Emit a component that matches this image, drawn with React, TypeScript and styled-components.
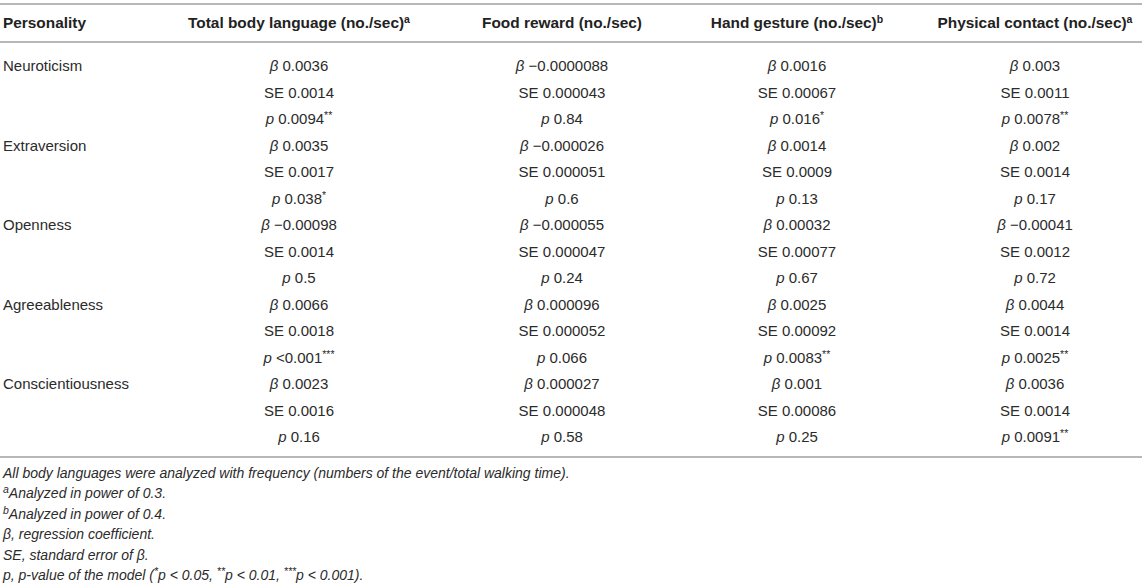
import React from "react";
import styled, { createGlobalStyle } from "styled-components";

const Global = createGlobalStyle`
  html, body { margin: 0; padding: 0; background: #fff; }
  body { font-family: "Liberation Sans", Arial, sans-serif; color: #2b2b2b; }
`;

const Page = styled.div`
  padding-top: 3px;
  width: 1142px;
`;

const Table = styled.table`
  width: 1142px;
  border-collapse: collapse;
  table-layout: fixed;
  font-size: 15px;
  border-top: 2px solid #b8b8b8;
  border-bottom: 2px solid #b8b8b8;
`;

const Col = styled.col<{ $w: number }>`
  width: ${(p) => p.$w}px;
`;

const HeadRow = styled.tr`
  height: 38px;
  border-bottom: 2px solid #b8b8b8;
`;

const Th = styled.th<{ $left?: boolean }>`
  font-weight: bold;
  font-size: 15.4px;
  color: #222;
  text-align: ${(p) => (p.$left ? "left" : "center")};
  padding: 0 0 0 ${(p) => (p.$left ? "3px" : "0")};
  line-height: 18px;
  white-space: nowrap;
`;

const Sup = styled.sup`
  font-size: 10.5px;
  line-height: 0;
  vertical-align: 5px;
`;

const Row = styled.tr<{ $first?: boolean; $last?: boolean }>`
  height: 26.5px;
  & > td {
    padding-top: ${(p) => (p.$first ? "10px" : "0")};
    padding-bottom: ${(p) => (p.$last ? "5.5px" : "0")};
  }
`;

const NameCell = styled.td`
  text-align: left;
  padding-left: 3px;
  line-height: 26.5px;
  white-space: nowrap;
`;

const Cell = styled.td`
  text-align: center;
  line-height: 26.5px;
  white-space: nowrap;
`;

const I = styled.i`
  font-style: italic;
`;

const Notes = styled.div`
  padding: 5px 0 0 3px;
  font-size: 14px;
  font-style: italic;
  line-height: 20.4px;
`;

const Note = styled.div`
  white-space: nowrap;
`;

const NoteSup = styled.sup`
  font-size: 10.5px;
  line-height: 0;
  vertical-align: 5px;
`;

type Stat = [string, string, string, string?];

interface Group {
  name: string;
  cols: Stat[];
}

const groups: Group[] = [
  {
    name: "Neuroticism",
    cols: [
      ["0.0036", "0.0014", "0.0094", "**"],
      ["\u22120.0000088", "0.000043", "0.84"],
      ["0.0016", "0.00067", "0.016", "*"],
      ["0.003", "0.0011", "0.0078", "**"],
    ],
  },
  {
    name: "Extraversion",
    cols: [
      ["0.0035", "0.0017", "0.038", "*"],
      ["\u22120.000026", "0.000051", "0.6"],
      ["0.0014", "0.0009", "0.13"],
      ["0.002", "0.0014", "0.17"],
    ],
  },
  {
    name: "Openness",
    cols: [
      ["\u22120.00098", "0.0014", "0.5"],
      ["\u22120.000055", "0.000047", "0.24"],
      ["0.00032", "0.00077", "0.67"],
      ["\u22120.00041", "0.0012", "0.72"],
    ],
  },
  {
    name: "Agreeableness",
    cols: [
      ["0.0066", "0.0018", "<0.001", "***"],
      ["0.000096", "0.000052", "0.066"],
      ["0.0025", "0.00092", "0.0083", "**"],
      ["0.0044", "0.0014", "0.0025", "**"],
    ],
  },
  {
    name: "Conscientiousness",
    cols: [
      ["0.0023", "0.0016", "0.16"],
      ["0.000027", "0.000048", "0.58"],
      ["0.001", "0.00086", "0.25"],
      ["0.0036", "0.0014", "0.0091", "**"],
    ],
  },
];

const headers: [string, string?][] = [
  ["Total body language (no./sec)", "a"],
  ["Food reward (no./sec)"],
  ["Hand gesture (no./sec)", "b"],
  ["Physical contact (no./sec)", "a"],
];

export default function App() {
  return (
    <Page>
      <Global />
      <Table>
        <colgroup>
          <Col $w={140} />
          <Col $w={318} />
          <Col $w={208} />
          <Col $w={262} />
          <Col $w={214} />
        </colgroup>
        <thead>
          <HeadRow>
            <Th $left>Personality</Th>
            {headers.map(([t, s]) => (
              <Th key={t}>
                {t}
                {s && <Sup>{s}</Sup>}
              </Th>
            ))}
          </HeadRow>
        </thead>
        <tbody>
          {groups.map((g, gi) =>
            [0, 1, 2].map((r) => (
              <Row
                key={g.name + r}
                $first={gi === 0 && r === 0}
                $last={gi === groups.length - 1 && r === 2}
              >
                <NameCell>{r === 0 ? g.name : ""}</NameCell>
                {g.cols.map((c, ci) => (
                  <Cell key={ci}>
                    {r === 0 && (
                      <>
                        <I>β</I> {c[0]}
                      </>
                    )}
                    {r === 1 && <>SE {c[1]}</>}
                    {r === 2 && (
                      <>
                        <I>p</I> {c[2]}
                        {c[3] && <Sup>{c[3]}</Sup>}
                      </>
                    )}
                  </Cell>
                ))}
              </Row>
            ))
          )}
        </tbody>
      </Table>
      <Notes>
        <Note>All body languages were analyzed with frequency (numbers of the event/total walking time).</Note>
        <Note>
          <NoteSup>a</NoteSup>Analyzed in power of 0.3.
        </Note>
        <Note>
          <NoteSup>b</NoteSup>Analyzed in power of 0.4.
        </Note>
        <Note>β, regression coefficient.</Note>
        <Note>SE, standard error of β.</Note>
        <Note>
          p, p-value of the model (<NoteSup>*</NoteSup>p &lt; 0.05, <NoteSup>**</NoteSup>p &lt; 0.01,{" "}
          <NoteSup>***</NoteSup>p &lt; 0.001).
        </Note>
      </Notes>
    </Page>
  );
}
